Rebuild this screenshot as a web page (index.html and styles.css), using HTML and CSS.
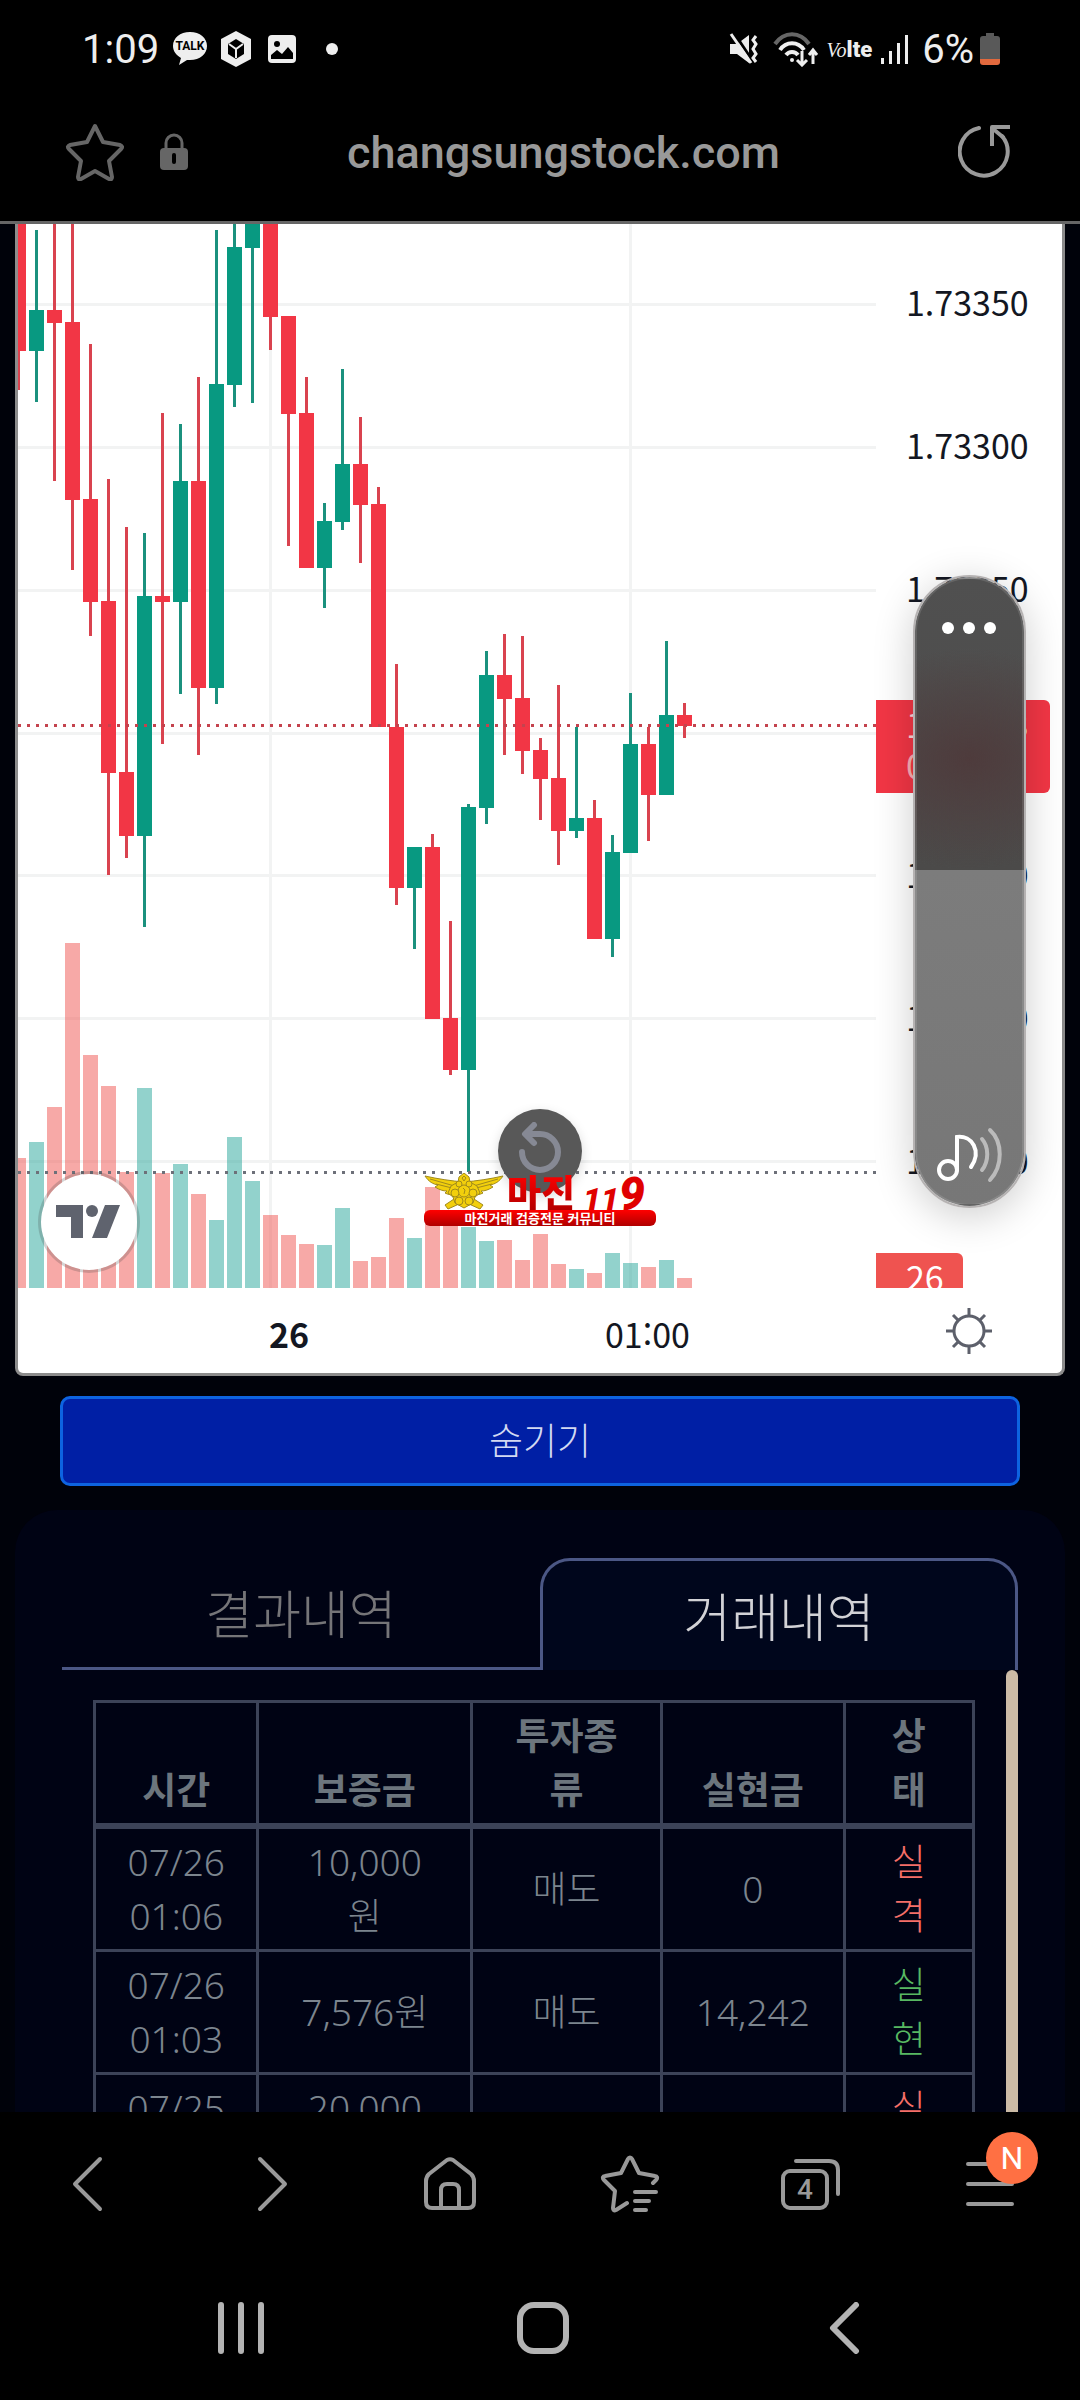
FILE: index.html
```html
<!DOCTYPE html>
<html lang="ko">
    <head>
        <meta charset="utf-8">
        <title>changsungstock.com</title>
        <link rel="stylesheet" href="styles.css">
    </head>
    <body>
    <header class="status">
        <span class="clock">1:09</span>
        <svg class="ic-talk" width="36" height="34" viewBox="0 0 36 34">
            <path d="M18 0C8 0 1 6 1 14c0 5 3 9 8 12l-2 7 8-5h3c10 0 17-6 17-14S28 0 18 0z" fill="#eee"/>
            <text x="18" y="18" class="talk-text">TALK</text>
        </svg>
        <svg class="ic-cube" width="34" height="36" viewBox="0 0 34 36">
            <path d="M17 0l15 8v20l-15 8-15-8V8z" fill="#eee"/>
            <path d="M17 8l8 5v10l-8 5-8-5V13z" fill="#000"/>
            <path d="M10 13l7 5 7-5M17 18v9" stroke="#eee" stroke-width="2" fill="none"/>
        </svg>
        <svg class="ic-photo" width="30" height="30" viewBox="0 0 30 30">
            <rect x="1" y="1" width="28" height="28" rx="4" fill="#eee"/>
            <circle cx="10" cy="10" r="3" fill="#000"/>
            <path d="M4 25v-4l6-5 5 4 6-7 5 6v6z" fill="#000"/>
        </svg>
        <span class="more-dot"></span>
        <svg class="ic-mute" width="32" height="32" viewBox="0 0 32 32">
            <path d="M1 11h7l12-9v28l-12-9H1z" fill="#eee"/>
            <path d="M5 0l20 30" stroke="#000" stroke-width="3"/>
            <path d="M2 1l20 29" stroke="#eee" stroke-width="3"/>
            <path d="M27 3l-3 4 3 4-3 5 3 5-3 4 3 4" stroke="#eee" stroke-width="3" fill="none"/>
        </svg>
        <svg class="ic-wifi" width="46" height="36" viewBox="0 0 46 36" fill="none" stroke-width="4">
            <path d="M2 13C11 0 27 0 36 13" stroke="#666"/>
            <path d="M7 19c6-9 18-9 24 0" stroke="#eee"/>
            <path d="M13 24c3-4 9-4 12 0" stroke="#eee"/>
            <circle cx="19" cy="29" r="2" fill="#eee"/>
            <path d="M29 20v14M24 29l5 5 5-5M40 33V19M36 24l4-5 4 5" stroke="#eee" stroke-width="3"/>
        </svg>
        <span class="volte"><i>Vo</i>lte</span>
        <svg class="ic-signal" width="30" height="30" viewBox="0 0 30 30" fill="#eee">
            <rect x="1" y="24" width="3" height="6"/><rect x="9" y="17" width="3" height="13"/>
            <rect x="17" y="9" width="3" height="21"/><rect x="25" y="1" width="3" height="29"/>
        </svg>
        <span class="percent">6%</span>
        <svg class="ic-battery" width="20" height="32" viewBox="0 0 20 32">
            <path d="M6 0h8v3h3a3 3 0 0 1 3 3v20H0V6a3 3 0 0 1 3-3h3z" fill="#595959"/>
            <path d="M0 26h20v3a3 3 0 0 1-3 3H3a3 3 0 0 1-3-3z" fill="#e2693d"/>
        </svg>
    </header>

    <div class="urlbar">
        <button class="icon-btn" aria-label="북마크">
            <svg width="60" height="58" viewBox="0 0 60 58" fill="none" stroke="#666" stroke-width="4" stroke-linejoin="round">
                <path d="M30 3l8 16 17 3c2 1 3 2 1 4L44 38l3 16c0 2-1 3-3 2L30 48 16 56c-2 1-3 0-3-2l3-16L4 26c-2-2-1-3 1-4l17-3z"/>
            </svg>
        </button>
        <svg class="ic-lock" width="30" height="38" viewBox="0 0 30 38">
            <path d="M7 17V10a8 8 0 0 1 16 0v7" fill="none" stroke="#666" stroke-width="3"/>
            <rect x="1" y="15" width="28" height="22" rx="4" fill="#666"/>
            <path d="M15 22v7" stroke="#000" stroke-width="4" stroke-linecap="round"/>
        </svg>
        <input class="url" type="text" value="changsungstock.com" aria-label="주소">
        <button class="icon-btn" aria-label="새로고침">
            <svg width="54" height="56" viewBox="0 0 54 56" fill="none" stroke="#999" stroke-width="4">
                <path d="M21 4A24 24 0 1 0 44 12" stroke-linecap="round"/>
                <path d="M34 22V3h18M34 4l12 10" stroke-linejoin="round"/>
            </svg>
        </button>
    </div>

    <main class="page">
        <section class="chart">
            <svg class="pane" id="pane"></svg>
            <div class="price-axis">
                <span class="price">1.73350</span>
                <span class="price">1.73300</span>
                <span class="price">1.73250</span>
                <span class="price"></span>
                <span class="price">1.73150</span>
                <span class="price">1.73100</span>
                <span class="price">1.73050</span>
                <div class="last-price">1.73203<br><span class="countdown">00:27</span></div>
                <div class="volume-tag">26</div>
            </div>
            <div class="time-axis">
                <b class="time day">26</b>
                <span class="time hour">01:00</span>
            </div>
            <button class="settings" aria-label="설정">
                <svg width="46" height="46" viewBox="0 0 46 46" fill="none" stroke="#5d606b" stroke-width="3">
                    <circle cx="23" cy="23" r="15"/>
                    <path d="M23 0v8M23 38v8M0 23h8M38 23h8M7 7l6 6M33 33l6 6M39 7l-6 6M13 33l-6 6"/>
                </svg>
            </button>

            <a class="tv-logo" href="#" aria-label="TradingView">
                <svg width="66" height="34" viewBox="0 0 66 34" fill="#5f636e">
                    <path d="M0 0h27v33H15V12H0z"/><circle cx="36" cy="6" r="6"/><path d="M49 0h15L51 33H36z"/>
                </svg>
            </a>
            <button class="reset" aria-label="차트 초기화">
                <svg width="44" height="54" viewBox="0 0 44 54" fill="none" stroke="#868994" stroke-width="6" stroke-linecap="round" stroke-linejoin="round">
                    <path d="M4 30a18 18 0 1 0 18-18H8M16 3L7 12l9 9"/>
                </svg>
            </button>
            <div class="banner">
                <div class="banner-top">
                    <svg width="80" height="38" viewBox="0 0 80 38" fill="#f2cf0c" stroke="#a08a1c" stroke-width="1">
                        <path d="M40 9C28 8 14 6 1 3c4 6 8 8 13 9l-3 2c5 3 8 4 12 4l-2 2c4 2 6 2 10 1zM40 9c12-1 26-3 39-6-4 6-8 8-13 9l3 2c-5 3-8 4-12 4l2 2c-4 2-6 2-10 1z"/>
                        <path d="M6 6l28 8M12 11l20 5M74 6l-28 8M68 11l-20 5" fill="none"/>
                        <path d="M30 26l-9 6 3 4 11-5zM50 26l9 6-3 4-11-5z"/>
                        <path d="M40 0l5 4 1 5 7 4 3 7-5 4-2 6-9 5-9-5-2-6-5-4 3-7 7-4 1-5z"/>
                        <circle cx="40" cy="18" r="6"/><circle cx="31" cy="20" r="4"/><circle cx="49" cy="20" r="4"/>
                        <circle cx="35" cy="28" r="4"/><circle cx="45" cy="28" r="4"/><circle cx="35" cy="11" r="3"/><circle cx="45" cy="11" r="3"/>
                        <path d="M38 5l2-2 2 2-2 3zM39 15l2 2-1 4" />
                    </svg>
                    <span class="brand">마진</span>
                    <span class="brand-num">11<span class="nine">9</span></span>
                </div>
                <div class="banner-text">마진거래 검증전문 커뮤니티</div>
            </div>
        </section>

        <button class="hide-btn">숨기기</button>

        <section class="panel">
            <div class="tabs">
                <button class="tab">결과내역</button>
                <button class="tab active">거래내역</button>
            </div>
            <div class="history">
                <div class="table-wrap">
                <table>
                    <colgroup><col class="c-time"><col class="c-deposit"><col class="c-kind"><col class="c-profit"><col class="c-state"></colgroup>
                    <thead>
                        <tr><th>시간</th><th>보증금</th><th>투자종류</th><th>실현금</th><th>상태</th></tr>
                    </thead>
                    <tbody>
                        <tr><td>07/26 01:06</td><td>10,000원</td><td>매도</td><td>0</td><td class="lose">실격</td></tr>
                        <tr><td>07/26 01:03</td><td>7,576원</td><td>매도</td><td>14,242</td><td class="win">실현</td></tr>
                        <tr><td>07/25 23:58</td><td>20,000원</td><td>매도</td><td>0</td><td class="lose">실격</td></tr>
                    </tbody>
                </table>
                </div>
                <div class="scrollbar"></div>
            </div>
        </section>
    </main>

    <div class="volume">
        <input class="volume-range" type="range" min="0" max="100" value="53" aria-label="음량">
        <svg class="volume-more" width="56" height="14" viewBox="0 0 56 14" fill="#fff">
            <circle cx="7" cy="7" r="6"/><circle cx="28" cy="7" r="6"/><circle cx="49" cy="7" r="6"/>
        </svg>
        <svg class="volume-note" width="68" height="58" viewBox="0 0 68 58" fill="none" stroke="#fff" stroke-width="4" stroke-linecap="round">
            <ellipse cx="13" cy="44" rx="9" ry="9"/>
            <path d="M22 44V11c15-2 25 14 14 30"/>
            <path d="M47 13c7 8 7 22 0 31M55 4c13 12 13 36 0 50" stroke="#bbb"/>
        </svg>
    </div>

    <nav class="browser-nav">
        <button class="nav-btn" aria-label="뒤로">
            <svg width="38" height="58" viewBox="0 0 38 58"><path d="M29 4L4 29l25 25"/></svg>
        </button>
        <button class="nav-btn" aria-label="앞으로">
            <svg width="38" height="58" viewBox="0 0 38 58"><path d="M9 4l25 25L9 54"/></svg>
        </button>
        <button class="nav-btn" aria-label="홈">
            <svg width="56" height="56" viewBox="0 0 56 56"><path d="M4 25c0-3 1-5 3-7L25 4c2-1 4-1 6 0l18 14c2 2 3 4 3 7v21c0 4-2 6-6 6H10c-4 0-6-2-6-6zM19 51V34c0-4 2-6 6-6h6c4 0 6 2 6 6v17"/></svg>
        </button>
        <button class="nav-btn" aria-label="북마크 목록">
            <svg width="60" height="58" viewBox="0 0 60 58"><path d="M53 28l3-3c2-2 1-4-1-4l-16-3-7-14c-1-2-3-2-4 0l-7 14-16 3c-2 0-3 2-1 4l11 11-2 17c0 2 1 3 3 2l11-7M35 37h21M35 46h14M35 55h11"/></svg>
        </button>
        <button class="nav-btn" aria-label="탭">
            <svg width="60" height="54" viewBox="0 0 60 54"><rect x="3" y="14" width="44" height="37" rx="7"/><path d="M16 4h33c6 0 9 3 9 9v24"/></svg>
            <span class="tab-count">4</span>
        </button>
        <button class="nav-btn" aria-label="메뉴">
            <svg width="48" height="44" viewBox="0 0 48 44"><path d="M2 2h44M2 22h44M2 42h44"/></svg>
            <span class="badge">N</span>
        </button>
    </nav>

    <nav class="system-nav">
        <button class="nav-btn" aria-label="최근 앱">
            <svg width="48" height="52" viewBox="0 0 48 52"><path d="M4 3v46M24 3v46M44 3v46"/></svg>
        </button>
        <button class="nav-btn" aria-label="홈">
            <svg width="54" height="54" viewBox="0 0 54 54"><rect x="4" y="4" width="46" height="46" rx="14"/></svg>
        </button>
        <button class="nav-btn" aria-label="뒤로">
            <svg width="34" height="52" viewBox="0 0 34 52"><path d="M28 3L5 26l23 23"/></svg>
        </button>
    </nav>

    <script src="script.js"></script>
    </body>
</html>
```

FILE: styles.css
```css
*{
    box-sizing: border-box;
}
body{
    margin: 0;
    height: 100vh;
    display: flex;
    flex-direction: column;
    position: relative;
    overflow: hidden;
    background-color: #000;
    font-family: "Noto Sans", "Noto Sans CJK KR", sans-serif;
}
button{
    background: none;
    border: 0;
    padding: 0;
    font: inherit;
    color: inherit;
}
svg{
    display: block;
    flex: none;
}

/* status bar */
.status{
    height: 98px;
    padding: 0 80px 0 82px;
    display: flex;
    align-items: center;
    color: #eee;
    font-family: Roboto, sans-serif;
    font-size: 40px;
}
.ic-talk{
    margin-left: 13px;
}
.ic-cube{
    margin-left: 11px;
}
.ic-photo{
    margin-left: 14px;
}
.talk-text{
    font: bold 12px Roboto, sans-serif;
    text-anchor: middle;
    fill: #000;
}
.more-dot{
    width: 12px;
    height: 12px;
    margin: 0 auto 0 29px;
    border-radius: 50%;
    background-color: #eee;
}
.ic-wifi{
    margin-left: 12px;
}
.volte{
    margin: 0 8px;
    font-size: 22px;
    font-weight: 900;
}
.volte i{
    font-family: "Liberation Serif", serif;
    font-size: 20px;
    font-weight: normal;
}
.percent{
    margin: 0 6px 0 12px;
}

/* address bar */
.urlbar{
    height: 126px;
    padding: 0 68px 15px 65px;
    display: flex;
    align-items: center;
    border-bottom: 3px solid #666;
}
.ic-lock{
    margin-left: 34px;
}
.url{
    flex: 1;
    min-width: 0;
    margin-right: 20px;
    padding: 0;
    border: 0;
    background: none;
    color: #999;
    font: 500 45px Roboto, sans-serif;
    text-align: center;
}

/* page */
.page{
    flex: 1;
    min-height: 0;
    overflow: hidden;
    padding: 0 15px;
    background-color: #00020a;
}
.chart{
    position: relative;
    display: grid;
    grid-template-columns: 1fr 186px;
    grid-template-rows: 1064px 85px;
    border: 3px solid #8c8c8c;
    border-top: 0;
    border-radius: 0 0 8px 8px;
    background-color: #fff;
    color: #131722;
    font: 34px "Noto Sans CJK KR", sans-serif;
}
.pane{
    width: 100%;
    height: 100%;
    overflow: hidden;
}
.price-axis{
    position: relative;
    overflow: hidden;
    padding-top: 6px;
}
.price{
    display: block;
    height: 143px;
    padding-left: 30px;
    line-height: 143px;
}
.last-price{
    position: absolute;
    top: 476px;
    left: 0;
    width: 174px;
    height: 93px;
    padding: 3px 0 0 30px;
    border-radius: 0 6px 6px 0;
    background-color: #f23645;
    color: #fcd7da;
    line-height: 41px;
}
.countdown{
    color: #f9afb5;
}
.volume-tag{
    position: absolute;
    top: 1029px;
    left: 0;
    width: 87px;
    height: 48px;
    padding-left: 30px;
    border-radius: 0 6px 6px 0;
    background-color: #ef5350;
    color: #fff;
    line-height: 48px;
}
.time-axis{
    display: flex;
    align-items: center;
    padding: 6px 0 0 251px;
}
.day{
    width: 300px;
}
.hour{
    margin-left: 36px;
}
.settings{
    display: flex;
    align-items: center;
    padding-left: 70px;
}
.tv-logo{
    position: absolute;
    left: 20px;
    bottom: 100px;
    width: 102px;
    height: 102px;
    display: flex;
    align-items: center;
    justify-content: center;
    border: 3px solid rgba(60, 60, 60, .22);
    border-radius: 50%;
    background: #fff padding-box;
}
.reset{
    position: absolute;
    left: calc(50% - 42px);
    top: 885px;
    width: 84px;
    height: 84px;
    display: flex;
    align-items: center;
    justify-content: center;
    padding-bottom: 4px;
    border-radius: 50%;
    background-color: #585858;
    box-shadow: 0 4px 12px rgba(0, 0, 0, .15);
}
.banner{
    position: absolute;
    left: calc(50% - 116px);
    bottom: 147px;
    width: 232px;
}
.banner-top{
    display: flex;
    height: 37px;
    font-weight: 900;
    line-height: 36px;
    color: #e00000;
}
.brand{
    margin-left: 3px;
    font-size: 37px;
    background: linear-gradient(#ff0000, #b40000);
    background-clip: text;
    color: transparent;
}
.brand-num{
    margin-left: 8px;
    font: italic 900 32px/42px Roboto, sans-serif;
}
.nine{
    font-size: 46px;
}
.banner-text{
    height: 16px;
    border-radius: 6px;
    background: linear-gradient(#ff0000, #b00000);
    color: #fff;
    font-size: 13px;
    font-weight: bold;
    line-height: 15px;
    text-align: center;
}
.hide-btn{
    display: block;
    width: calc(100% - 90px);
    height: 90px;
    margin: 20px auto 24px;
    padding-bottom: 4px;
    border: 3px solid #0d63e0;
    border-radius: 10px;
    background-color: #001fa5;
    color: #d3d9f2;
    font-size: 37px;
    font-weight: 300;
}

/* history panel */
.panel{
    padding: 48px 47px 0;
    border-radius: 42px 42px 0 0;
    background-color: #000314;
}
.tabs{
    display: flex;
}
.tab{
    width: 50%;
    height: 112px;
    padding-bottom: 3px;
    border-bottom: 3px solid #4b5785;
    color: #757578;
    font-size: 52px;
    font-weight: 300;
}
.tab.active{
    border: 3px solid #4b5785;
    border-bottom: 0;
    border-radius: 30px 30px 0 0;
    background-color: #00061c;
    color: #d2d2d6;
}
.history{
    display: flex;
}
.table-wrap{
    flex: 1;
    padding: 30px 31px 0 31px;
}
.scrollbar{
    width: 12px;
    border-radius: 6px;
    background-color: #ccbba6;
}
table{
    width: 100%;
    table-layout: fixed;
    border-collapse: collapse;
    color: #6c757d;
    font-size: 37px;
    line-height: 54px;
    text-align: center;
}
.c-time{
    width: 18.6%;
}
.c-deposit{
    width: 24.3%;
}
.c-kind{
    width: 21.6%;
}
.c-profit{
    width: 20.8%;
}
th, td{
    padding: 6px 32px;
    border: 3px solid #3c4358;
}
th{
    vertical-align: bottom;
    border-bottom-width: 6px;
}
td{
    color: #7c858e;
    font-weight: 300;
}
td:first-child{
    padding: 6px 28px;
}
.lose{
    color: #f56f68;
}
.win{
    color: #58b862;
}

/* volume slider */
.volume{
    position: absolute;
    top: 575px;
    right: 54px;
    width: 113px;
    height: 633px;
    border: 2px solid #b5b2b2;
    border-radius: 57px;
    box-shadow: 0 8px 40px rgba(0, 0, 0, .2);
}
.volume-range{
    appearance: none;
    writing-mode: vertical-lr;
    direction: rtl;
    display: block;
    width: 100%;
    height: 100%;
    margin: 0;
    border: 2px solid rgba(255, 255, 255, .12);
    border-radius: 55px;
    background: radial-gradient(ellipse 150px 110px at 50% 180px, #4e3b3c, transparent), linear-gradient(#505050 0, #4b4a49 291px, #7c7c7c 291px, #777 100%);
}
.volume-range::-webkit-slider-thumb{
    appearance: none;
    width: 1px;
    height: 1px;
}
.volume-more{
    position: absolute;
    top: 44px;
    left: 26px;
}
.volume-note{
    position: absolute;
    bottom: 22px;
    left: 20px;
}

/* bottom bars */
.browser-nav{
    height: 144px;
    display: grid;
    grid-template-columns: repeat(6, 1fr);
    stroke: #999;
    stroke-width: 4px;
}
.system-nav{
    height: 144px;
    padding: 0 84px 0 90px;
    display: grid;
    grid-template-columns: repeat(3, 1fr);
    stroke: #b3b3b3;
    stroke-width: 6px;
}
.nav-btn{
    position: relative;
    display: flex;
    align-items: center;
    justify-content: center;
}
.nav-btn svg{
    fill: none;
    stroke-linecap: round;
    stroke-linejoin: round;
}
.tab-count{
    position: absolute;
    left: 50%;
    top: 50%;
    margin: -14px 0 0 -13px;
    color: #999;
    font: 500 28px/40px Roboto, sans-serif;
}
.badge{
    position: absolute;
    left: 50%;
    top: 20px;
    width: 52px;
    height: 52px;
    margin-left: -4px;
    border-radius: 50%;
    background-color: #ff7043;
    color: #fff;
    font: 32px/52px Roboto, sans-serif;
    text-align: center;
}
```

FILE: script.js
```js
// x step and body width of one candle
const STEP = 18;
const BODY = 15;
const BOTTOM = 1288;

// up or down, high, body top, body bottom, low, volume top
const candles = [
    ["d", 200, 200, 351, 390, 1158], ["u", 230, 310, 351, 402, 1142], ["d", 200, 310, 323, 481, 1107],
    ["d", 200, 322, 500, 570, 943], ["d", 344, 499, 602, 636, 1055], ["d", 479, 601, 773, 875, 1086],
    ["d", 527, 772, 836, 858, 1172], ["u", 533, 596, 836, 927, 1088], ["d", 413, 596, 602, 744, 1173],
    ["u", 424, 481, 602, 694, 1164], ["d", 377, 481, 688, 755, 1194], ["u", 230, 384, 688, 704, 1220],
    ["u", 200, 247, 385, 407, 1137], ["u", 200, 200, 248, 403, 1181], ["d", 200, 200, 317, 350, 1215],
    ["d", 316, 316, 414, 546, 1235], ["d", 377, 413, 568, 568, 1244], ["u", 503, 521, 568, 608, 1245],
    ["u", 369, 464, 522, 530, 1208], ["d", 417, 464, 505, 563, 1261], ["d", 487, 504, 727, 727, 1257],
    ["d", 664, 727, 888, 905, 1218], ["u", 847, 847, 888, 949, 1238], ["d", 834, 847, 1019, 1019, 1187],
    ["d", 921, 1018, 1070, 1075, 1214], ["u", 804, 807, 1070, 1172, 1227], ["u", 651, 675, 808, 824, 1241],
    ["d", 634, 675, 699, 755, 1240], ["d", 636, 698, 751, 774, 1260], ["d", 738, 750, 779, 820, 1234],
    ["d", 685, 778, 831, 865, 1264], ["u", 727, 818, 831, 838, 1269], ["d", 800, 818, 939, 939, 1273],
    ["u", 835, 852, 939, 957, 1253], ["u", 693, 744, 853, 853, 1263], ["d", 727, 744, 795, 841, 1267],
    ["u", 641, 715, 795, 795, 1260], ["d", 703, 715, 726, 738, 1278]
];

const NS = "http://www.w3.org/2000/svg";
const view = document.createElementNS(NS, "g");
view.setAttribute("transform", "translate(-18 -224)");
document.getElementById("pane").appendChild(view);

function rect(x, y, w, h, fill){
    const r = document.createElementNS(NS, "rect");
    r.setAttribute("x", x);
    r.setAttribute("y", y);
    r.setAttribute("width", w);
    r.setAttribute("height", h);
    r.setAttribute("fill", fill);
    view.appendChild(r);
}

function dots(y, color){
    for(let x = 18; x < 2000; x += 9){
        rect(x, y, 3, 3, color);
    }
}

// grid
for(const y of [303, 446, 589, 732, 874, 1017, 1160]){
    rect(18, y, 2000, 3, "#f2f3f3");
}
for(const x of [269, 629]){
    rect(x, 200, 3, BOTTOM - 200, "#f2f3f3");
}

// volume bars
candles.forEach((c, i) => {
    rect(11 + i * STEP, c[5], BODY, BOTTOM - c[5], c[0] == "u" ? "rgba(38,166,154,.5)" : "rgba(239,83,80,.5)");
});

// candles
candles.forEach((c, i) => {
    const x = 11 + i * STEP;
    rect(x + 6, c[1], 3, c[4] - c[1], c[0] == "u" ? "#1b917e" : "#d9434f");
    rect(x, c[2], BODY, c[3] - c[2], c[0] == "u" ? "#089981" : "#f23645");
});

dots(724, "#c4434e");
dots(1171, "#6d7079");
```
